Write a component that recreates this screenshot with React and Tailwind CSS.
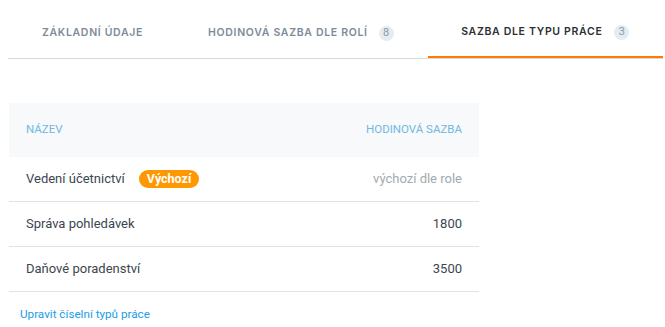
import React from 'react';

const tabs = [
  { label: 'ZÁKLADNÍ ÚDAJE', pad: 'px-[34px]' },
  { label: 'HODINOVÁ SAZBA DLE ROLÍ', count: 8, pad: 'pl-[31px] pr-[34px]' },
  { label: 'SAZBA DLE TYPU PRÁCE', count: 3, active: true },
];

const rows = [
  { name: 'Vedení účetnictví', isDefault: true, rate: 'výchozí dle role' },
  { name: 'Správa pohledávek', rate: '1800' },
  { name: 'Daňové poradenství', rate: '3500' },
];

export default function App() {
  return (
    <div className="w-[665px] h-[327px] bg-white pl-2 pr-[2px] pt-2 font-['Roboto',sans-serif]">
      {/* --- Tabs --- */}
      <div className="flex border-b border-[#d5dadf]">
        {tabs.map((tab) => (
          <div
            key={tab.label}
            className={
              tab.active
                ? 'h-[50px] flex-1 flex items-center justify-center gap-3 border-b-2 border-[#ff7a00] mb-[-1px]'
                : 'h-[50px] flex items-center gap-[11px] ' + tab.pad
            }
          >
            <span
              className={
                'font-["Inter",sans-serif] text-[10.5px] font-semibold tracking-[0.065em] ' +
                (tab.active ? 'text-[#2b2f33]' : 'text-[#7e8b97]')
              }
            >
              {tab.label}
            </span>
            {tab.count && (
              <span className="w-[15px] h-[15px] rounded-full bg-[#e4ecf2] text-[#8b99a6] text-[11px] flex items-center justify-center">
                {tab.count}
              </span>
            )}
          </div>
        ))}
      </div>

      {/* --- Table --- */}
      <div className="w-[470px] ml-px mt-[44px]">
        <div className="h-[54px] bg-[#f7f9fb] flex items-center justify-between px-[17px] text-[11.5px] text-[#72b8e2]">
          <span>NÁZEV</span>
          <span>HODINOVÁ SAZBA</span>
        </div>
        {rows.map((row) => (
          <div
            key={row.name}
            className="h-[45px] flex items-center justify-between px-[17px] border-b border-[#dfe3e7] text-[13px]"
          >
            <div className="flex items-center gap-[14px]">
              <span className="text-[#3b4650]">{row.name}</span>
              {row.isDefault && (
                <span className="bg-[#ff9800] text-white font-bold text-[12.5px] leading-none rounded-full px-[8px] py-[3px]">
                  Výchozí
                </span>
              )}
            </div>
            <span className={row.isDefault ? 'text-[#a2aab2]' : 'text-[#3b4650]'}>
              {row.rate}
            </span>
          </div>
        ))}
      </div>

      <div className="pl-3 mt-[14px] text-[11.7px] text-[#1a9de6]">Upravit číselní typů práce</div>
    </div>
  );
}
